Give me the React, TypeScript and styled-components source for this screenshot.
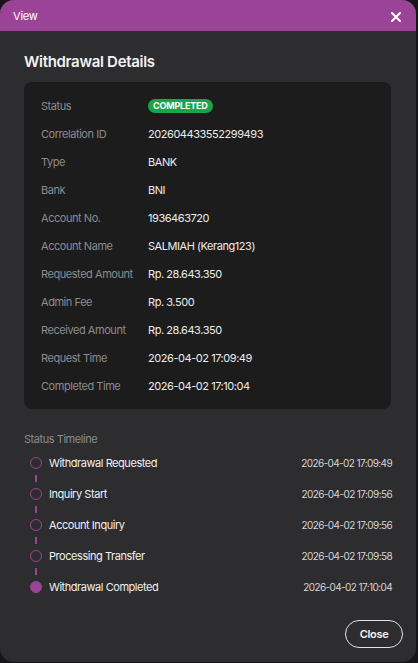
import React from 'react';
import styled, { createGlobalStyle } from 'styled-components';

const GlobalStyle = createGlobalStyle`
  html, body {
    margin: 0;
    padding: 0;
    background: #161618;
  }
  body {
    font-family: Inter, "Noto Sans", sans-serif;
    -webkit-font-smoothing: antialiased;
  }
`;

const Modal = styled.div`
  width: 416px;
  height: 662px;
  background: #2d2c2f;
  border-radius: 14px;
  overflow: hidden;
  display: flex;
  flex-direction: column;
`;

const ModalHeader = styled.div`
  height: 31px;
  flex: none;
  background: #9b4497;
  display: flex;
  align-items: center;
  justify-content: space-between;
  padding: 0 14px 0 13px;
  color: #fff;
  font-size: 11px;
  letter-spacing: -0.2px;
`;

const CloseIcon = styled.button`
  background: none;
  border: none;
  padding: 0;
  width: 12px;
  height: 12px;
  display: flex;
  cursor: pointer;
  margin-top: 3px;
`;

const ModalBody = styled.div`
  flex: 1;
  padding: 21px 25px 0 24px;
  display: flex;
  flex-direction: column;
`;

const Title = styled.h2`
  margin: 0 0 10px;
  font-size: 15px;
  font-weight: 600;
  color: #f2f2f2;
  letter-spacing: -0.3px;
  line-height: 20px;
`;

const DetailCard = styled.div`
  background: #1c1c1d;
  border-radius: 8px;
  padding: 10px 17px 9px;
  display: flex;
  flex-direction: column;
`;

const DetailRow = styled.div`
  display: grid;
  grid-template-columns: 107px 1fr;
  align-items: center;
  height: 28px;
  font-size: 11px;
  letter-spacing: -0.45px;
`;

const Label = styled.span`
  color: #8c8b8e;
`;

const Value = styled.span`
  color: #ececec;
`;

const Badge = styled.span`
  justify-self: start;
  background: #17a548;
  color: #fff;
  font-size: 9px;
  font-weight: 700;
  border-radius: 7px;
  padding: 0 5px;
  height: 14px;
  line-height: 14px;
  letter-spacing: -0.2px;
`;

const SectionLabel = styled.div`
  margin-top: 23px;
  font-size: 11px;
  color: #8c8b8e;
  letter-spacing: -0.45px;
  line-height: 14px;
`;

const Timeline = styled.div`
  margin-top: 1px;
  display: flex;
  flex-direction: column;
`;

const Step = styled.div`
  position: relative;
  display: flex;
  align-items: center;
  justify-content: space-between;
  height: 31px;
  padding-left: 25px;

  &:not(:last-child)::after {
    content: '';
    position: absolute;
    left: 11px;
    top: 28px;
    width: 2px;
    height: 7px;
    background: #9b4497;
  }
`;

const Dot = styled.span<{ $filled: boolean }>`
  position: absolute;
  left: 6px;
  top: 50%;
  margin-top: -6px;
  width: 10px;
  height: 10px;
  border-radius: 50%;
  border: 1px solid #9b4497;
  background: ${(p) => (p.$filled ? '#9b4497' : 'transparent')};
`;

const StepName = styled.span`
  font-size: 11px;
  color: #f0f0f0;
  letter-spacing: -0.45px;
`;

const StepTime = styled.span`
  font-size: 10px;
  color: #d6d6d6;
  letter-spacing: -0.6px;
  margin-right: -1px;
`;

const Footer = styled.div`
  flex: none;
  display: flex;
  justify-content: flex-end;
  padding: 0 13px 14px;
  margin-top: auto;
`;

const CloseButton = styled.button`
  height: 28px;
  width: 58px;
  border-radius: 14px;
  border: 1px solid #e3e3e3;
  background: transparent;
  color: #f3f3f3;
  font-family: inherit;
  font-size: 11px;
  font-weight: 600;
  letter-spacing: -0.3px;
  cursor: pointer;
`;

const details: { label: string; value: string; badge?: boolean }[] = [
  { label: 'Status', value: 'COMPLETED', badge: true },
  { label: 'Correlation ID', value: '202604433552299493' },
  { label: 'Type', value: 'BANK' },
  { label: 'Bank', value: 'BNI' },
  { label: 'Account No.', value: '1936463720' },
  { label: 'Account Name', value: 'SALMIAH (Kerang123)' },
  { label: 'Requested Amount', value: 'Rp. 28.643.350' },
  { label: 'Admin Fee', value: 'Rp. 3.500' },
  { label: 'Received Amount', value: 'Rp. 28.643.350' },
  { label: 'Request Time', value: '2026-04-02 17:09:49' },
  { label: 'Completed Time', value: '2026-04-02 17:10:04' },
];

const steps = [
  { name: 'Withdrawal Requested', time: '2026-04-02 17:09:49' },
  { name: 'Inquiry Start', time: '2026-04-02 17:09:56' },
  { name: 'Account Inquiry', time: '2026-04-02 17:09:56' },
  { name: 'Processing Transfer', time: '2026-04-02 17:09:58' },
  { name: 'Withdrawal Completed', time: '2026-04-02 17:10:04' },
];

export default function App() {
  return (
    <>
      <GlobalStyle />
      <Modal>
        <ModalHeader>
          View
          <CloseIcon aria-label="Close">
            <svg width="12" height="12" viewBox="0 0 12 12">
              <path d="M2 2L10 10M10 2L2 10" stroke="#fff" strokeWidth="2" strokeLinecap="round" />
            </svg>
          </CloseIcon>
        </ModalHeader>
        <ModalBody>
          <Title>Withdrawal Details</Title>
          <DetailCard>
            {details.map((d) => (
              <DetailRow key={d.label}>
                <Label>{d.label}</Label>
                {d.badge ? <Badge>{d.value}</Badge> : <Value>{d.value}</Value>}
              </DetailRow>
            ))}
          </DetailCard>
          <SectionLabel>Status Timeline</SectionLabel>
          <Timeline>
            {steps.map((s, i) => (
              <Step key={s.name}>
                <Dot $filled={i === steps.length - 1} />
                <StepName>{s.name}</StepName>
                <StepTime>{s.time}</StepTime>
              </Step>
            ))}
          </Timeline>
        </ModalBody>
        <Footer>
          <CloseButton>Close</CloseButton>
        </Footer>
      </Modal>
    </>
  );
}
